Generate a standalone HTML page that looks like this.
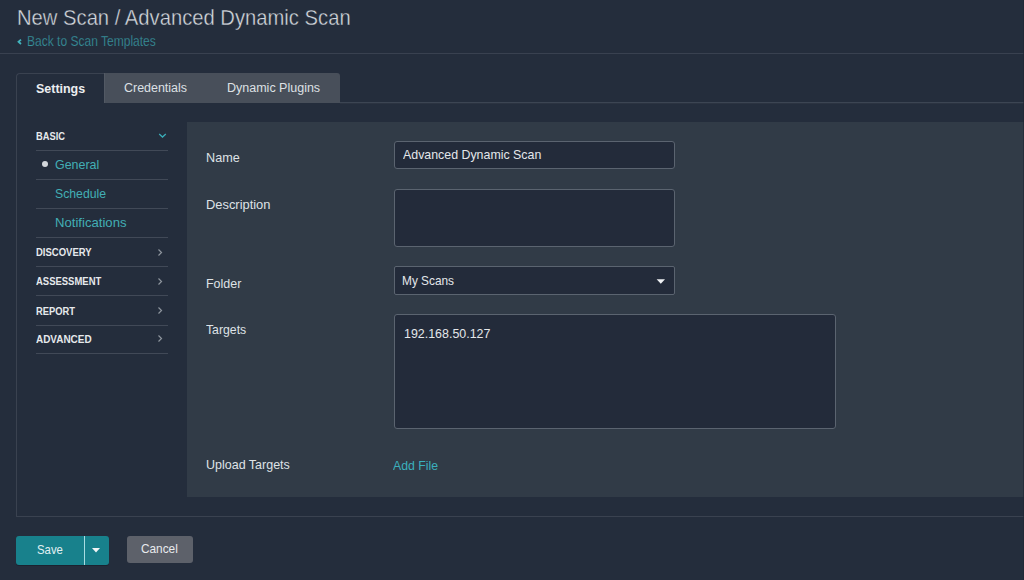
<!DOCTYPE html>
<html><head><meta charset="utf-8">
<style>
*{margin:0;padding:0;box-sizing:border-box}
html,body{width:1024px;height:580px;overflow:hidden;background:#242d3c;font-family:"Liberation Sans",sans-serif;color:#e3e6ea}
.a{position:absolute;white-space:nowrap;transform-origin:0 0}
.title{left:17px;top:6px;font-size:21.5px;line-height:24px;color:#d3d7dd;-webkit-text-stroke:0.35px #242d3c;transform:scaleX(0.94)}
.back{left:27px;top:33px;font-size:14px;line-height:16px;color:#3896a0;-webkit-text-stroke:0.25px #242d3c;transform:scaleX(0.859)}
.hr{left:0;top:53px;width:1024px;height:1px;background:#394150}
.lb{left:16px;top:103px;width:1px;height:414px;background:#3a4250}
.bb{left:16px;top:516px;width:1008px;height:1px;background:#3a4250}
.st{left:16px;top:73px;width:89px;height:30px;border-top:1px solid #3a4250;border-left:1px solid #3a4250;border-top-left-radius:4px}
.tabs{left:104px;top:73px;width:236px;height:30px;background:#484f5a;border-top-right-radius:3px;border-left:1px solid #525964}
.tabline{left:340px;top:102px;width:684px;height:1px;background:#3c4553;box-shadow:0 1px 0 #2b3341}
.tab{font-size:12px;line-height:14px;top:81px}
.panel{left:187px;top:122px;width:837px;height:375px;background:#313b47}
.sl{left:36px;width:132px;height:1px;background:#414957}
.sh{left:36px;font-size:11px;font-weight:bold;line-height:12px;color:#e6e9ec}
.si{left:55px;font-size:13px;line-height:16px;color:#42afb5}
.lbl{left:205.6px;font-size:13px;line-height:16px;color:#dfe2e6}
.inp{position:absolute;background:#232b3a;border:1px solid #5b6470;border-radius:3px}
.txt{font-size:13px;line-height:16px;color:#e4e7ea}
</style></head><body>
<div class="a title">New Scan / Advanced Dynamic Scan</div>
<svg class="a" style="left:16px;top:37px" width="8" height="10" viewBox="0 0 8 10"><path d="M5 2.6 L2.5 4.8 L5 7" stroke="#42b3bd" stroke-width="1.8" fill="none"/></svg>
<div class="a back">Back to Scan Templates</div>
<div class="a hr"></div>

<div class="a lb"></div>
<div class="a bb"></div>
<div class="a st"></div>
<div class="a tabs"></div>
<div class="a tabline"></div>
<div class="a tab" style="left:36px;top:82px;font-weight:bold;color:#eceef0;transform:scaleX(1.038)">Settings</div>
<div class="a tab" style="left:124px;color:#dde0e4;transform:scaleX(1.038)">Credentials</div>
<div class="a tab" style="left:227px;color:#dde0e4;transform:scaleX(1.042)">Dynamic Plugins</div>

<!-- sidebar -->
<div class="a sh" style="top:130px;transform:scaleX(0.847)">BASIC</div>
<svg class="a" style="left:158px;top:132px" width="9" height="7" viewBox="0 0 9 7"><path d="M1.2 2 L4.5 5 L7.8 2" stroke="#3aadb9" stroke-width="1.3" fill="none"/></svg>
<div class="a sl" style="top:150px"></div>
<div class="a" style="left:42px;top:161px;width:6px;height:6px;border-radius:50%;background:#d3d7dc"></div>
<div class="a si" style="top:157px;transform:scaleX(0.957)">General</div>
<div class="a sl" style="top:179px"></div>
<div class="a si" style="top:186px;transform:scaleX(0.943)">Schedule</div>
<div class="a sl" style="top:208px"></div>
<div class="a si" style="top:215px;transform:scaleX(1.01)">Notifications</div>
<div class="a sl" style="top:237px"></div>
<div class="a sh" style="top:246px;transform:scaleX(0.863)">DISCOVERY</div>
<div class="a sl" style="top:266px"></div>
<div class="a sh" style="top:275px;transform:scaleX(0.861)">ASSESSMENT</div>
<div class="a sl" style="top:295px"></div>
<div class="a sh" style="top:305px;transform:scaleX(0.852)">REPORT</div>
<div class="a sl" style="top:325px"></div>
<div class="a sh" style="top:333px;transform:scaleX(0.903)">ADVANCED</div>
<div class="a sl" style="top:353px"></div>
<svg class="a" style="left:156px;top:248px" width="8" height="10" viewBox="0 0 8 10"><path d="M2.5 1.5 L5.5 4.5 L2.5 7.5" stroke="#8e959e" stroke-width="1.2" fill="none"/></svg>
<svg class="a" style="left:156px;top:277px" width="8" height="10" viewBox="0 0 8 10"><path d="M2.5 1.5 L5.5 4.5 L2.5 7.5" stroke="#8e959e" stroke-width="1.2" fill="none"/></svg>
<svg class="a" style="left:156px;top:306px" width="8" height="10" viewBox="0 0 8 10"><path d="M2.5 1.5 L5.5 4.5 L2.5 7.5" stroke="#8e959e" stroke-width="1.2" fill="none"/></svg>
<svg class="a" style="left:156px;top:334px" width="8" height="10" viewBox="0 0 8 10"><path d="M2.5 1.5 L5.5 4.5 L2.5 7.5" stroke="#8e959e" stroke-width="1.2" fill="none"/></svg>

<!-- form panel -->
<div class="a panel"></div>
<div class="a lbl" style="top:150px;transform:scaleX(0.972)">Name</div>
<div class="inp" style="left:394px;top:141px;width:281px;height:28px"></div>
<div class="a txt" style="left:403px;top:147px;transform:scaleX(0.952)">Advanced Dynamic Scan</div>
<div class="a lbl" style="top:197px;transform:scaleX(0.991)">Description</div>
<div class="inp" style="left:394px;top:189px;width:281px;height:58px"></div>
<div class="a lbl" style="top:276px;transform:scaleX(0.958)">Folder</div>
<div class="inp" style="left:394px;top:266px;width:281px;height:29px;border-radius:2px"></div>
<div class="a txt" style="left:402px;top:273px;transform:scaleX(0.912)">My Scans</div>
<svg class="a" style="left:656px;top:279px" width="10" height="6" viewBox="0 0 10 6"><path d="M0.6 0.3 L9 0.3 L4.8 4.8 Z" fill="#eef0f3"/></svg>
<div class="a lbl" style="top:322px;transform:scaleX(0.942)">Targets</div>
<div class="inp" style="left:394px;top:314px;width:442px;height:115px"></div>
<div class="a txt" style="left:404px;top:326px;transform:scaleX(0.956)">192.168.50.127</div>
<div class="a lbl" style="top:457px;transform:scaleX(0.961)">Upload Targets</div>
<div class="a txt" style="left:393px;top:458px;color:#3bb0bd;transform:scaleX(0.945)">Add File</div>

<!-- buttons -->
<div class="a" style="left:16px;top:536px;width:92.5px;height:29px;background:#18818c;border-radius:3px;box-shadow:0 1px 0 #1b2230"></div>
<div class="a" style="left:84px;top:536px;width:1px;height:29px;background:#a9dce2"></div>
<div class="a txt" style="left:37px;top:542px;color:#e2f0f2;transform:scaleX(0.873)">Save</div>
<svg class="a" style="left:92px;top:548px" width="9" height="5" viewBox="0 0 9 5"><path d="M0 0 L8 0 L4 4.5 Z" fill="#f2f5f6"/></svg>
<div class="a" style="left:127px;top:536px;width:66px;height:27px;background:#5d616a;border-radius:3px"></div>
<div class="a txt" style="left:141px;top:541px;color:#e8eaed;transform:scaleX(0.91)">Cancel</div>
<div class="a" style="left:1023px;top:0;width:1px;height:580px;background:#1e2531;opacity:0.6"></div>
</body></html>
